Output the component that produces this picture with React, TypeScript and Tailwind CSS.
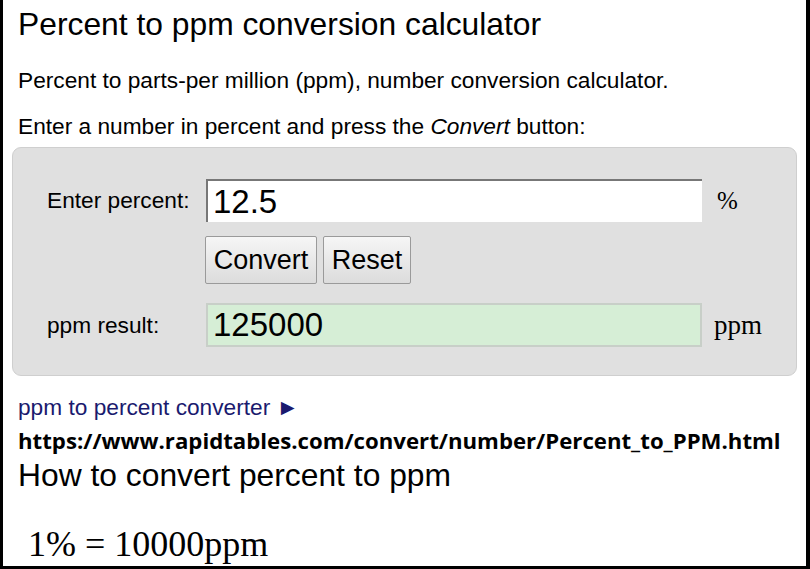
import React from "react";

export default function App() {
  return (
    <div className="w-[810px] h-[569px] bg-black overflow-hidden">
      <div className="w-[803px] h-[566px] ml-[3px] bg-white relative overflow-hidden" style={{ fontFamily: '"Liberation Sans", Arial, sans-serif' }}>
        <div className="pl-[15px] pt-[4px] text-black">
          <h1 className="text-[31.8px] leading-[40px] m-0 font-normal">Percent to ppm conversion calculator</h1>
          <p className="text-[22.7px] leading-[28px] mt-[22px]">Percent to parts-per million (ppm), number conversion calculator.</p>
          <p className="text-[22.7px] leading-[28px] mt-[18px]">
            Enter a number in percent and press the <i>Convert</i> button:
          </p>
        </div>
        <div className="ml-[9px] mr-[9px] mt-[7px] h-[229px] rounded-[9px] bg-[#e0e0e0] border border-[#cfcfcf] pt-[31px]">
          <div className="flex items-center h-[43px]">
            <div className="w-[193px] pl-[34px] text-[22.7px]">Enter percent:</div>
            <div className="w-[496px] h-[43px] bg-white border-t-2 border-l-2 border-[#777] flex items-center pl-[5px] text-[33px]">12.5</div>
            <div className="pl-[15px] text-[25px]" style={{ fontFamily: '"Liberation Serif", serif' }}>%</div>
          </div>
          <div className="flex mt-[14px] ml-[192px] gap-[6px]">
            <button className="h-[48px] w-[112px] rounded-[2px] border border-[#9a9a9a] bg-gradient-to-b from-[#f6f6f6] to-[#dcdcdc] text-[27px]">Convert</button>
            <button className="h-[48px] w-[88px] rounded-[2px] border border-[#9a9a9a] bg-gradient-to-b from-[#f6f6f6] to-[#dcdcdc] text-[27px]">Reset</button>
          </div>
          <div className="flex items-center h-[44px] mt-[19px]">
            <div className="w-[193px] pl-[34px] text-[22.7px]">ppm result:</div>
            <div className="w-[496px] h-[44px] bg-[#d6eed6] border-2 border-[#c8cfc8] flex items-center pl-[5px] text-[33px]">125000</div>
            <div className="pl-[12px] text-[27px]" style={{ fontFamily: '"Liberation Serif", serif' }}>ppm</div>
          </div>
        </div>
        <div className="pl-[15px] mt-[17px]">
          <div className="text-[22.7px] leading-[28px] text-[#1a1a6e]">ppm to percent converter ►</div>
          <div className="text-[22.2px] leading-[28px] mt-[6px] font-bold" style={{ fontFamily: '"Open Sans", sans-serif' }}>https://www.rapidtables.com/convert/number/Percent_to_PPM.html</div>
          <div className="text-[31.8px] leading-[36px] mt-[2px]">How to convert percent to ppm</div>
          <div className="text-[36px] leading-[40px] mt-[31px] pl-[10px]" style={{ fontFamily: '"Liberation Serif", serif' }}>1% = 10000ppm</div>
        </div>
      </div>
    </div>
  );
}
